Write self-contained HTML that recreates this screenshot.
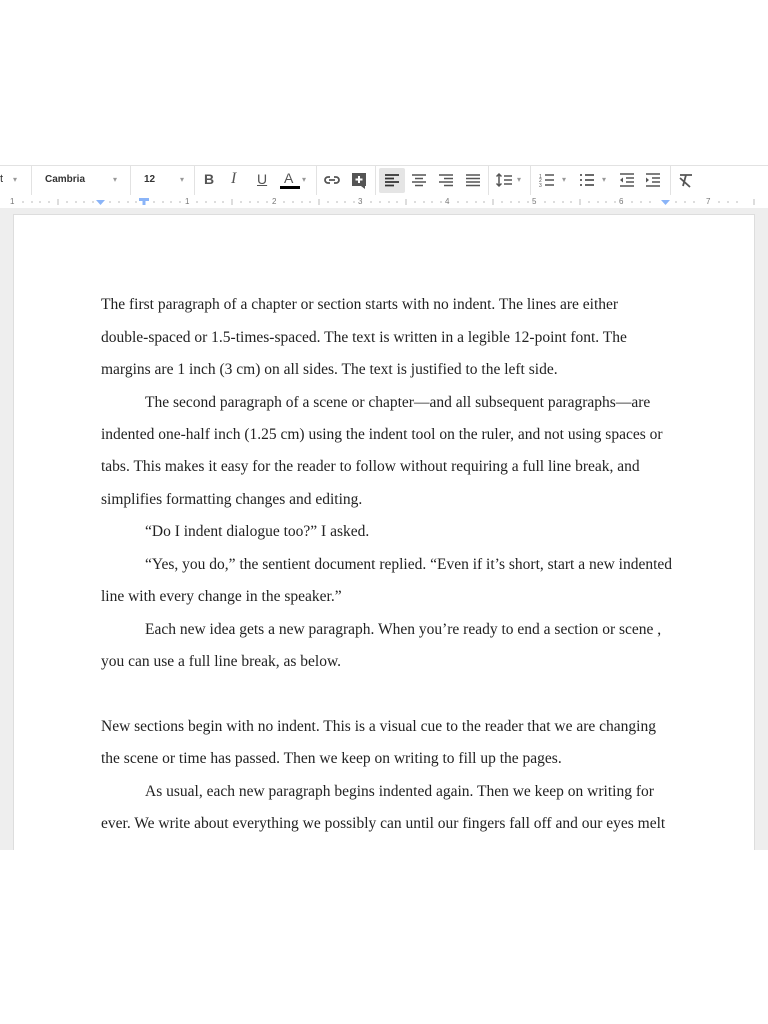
<!DOCTYPE html>
<html><head><style>
body{margin:0;width:768px;height:1024px;background:#fff;position:relative;overflow:hidden;font-family:"Liberation Sans",sans-serif}
.tb{position:absolute;left:0;top:165px;width:768px;height:29px;border-top:1px solid #e2e2e2;border-bottom:1px solid #e2e2e2;background:#fff}
.tb span{position:absolute;top:7px;font-size:11px;color:#333}
.sep{position:absolute;top:0;width:1px;height:29px;background:#e2e2e2}
.ic{position:absolute;top:6px}
.ruler{position:absolute;left:0;top:195px;width:768px;height:13px;background:#fff;font-size:8px;color:#777}
.gray{position:absolute;left:0;top:208px;width:768px;height:642px;background:#eeeeee;overflow:hidden}
.page{position:absolute;left:13px;top:6px;width:740px;height:700px;background:#fff;border:1px solid #ddd}
.l{position:absolute;left:101px;white-space:nowrap;font-family:"Liberation Serif",serif;font-size:15.5px;color:#222}
</style></head><body>
<div class="tb">
<span style="left:0">t</span><span style="left:13px;color:#999;font-size:8px;top:9px">▾</span>
<div class="sep" style="left:31px"></div>
<span style="left:45px;font-weight:bold;font-size:10px;top:8px">Cambria</span><span style="left:113px;color:#999;font-size:8px;top:9px">▾</span>
<div class="sep" style="left:130px"></div>
<span style="left:144px;font-weight:bold;font-size:10px;top:8px">12</span><span style="left:180px;color:#999;font-size:8px;top:9px">▾</span>
<div class="sep" style="left:194px"></div>
<span style="left:204px;font-weight:bold;font-size:14px;top:5px;color:#555">B</span>
<span style="left:231px;font-style:italic;font-family:'Liberation Serif';font-size:16px;top:4px;color:#555">I</span>
<span style="left:257px;text-decoration:underline;font-size:14px;top:5px;color:#555">U</span>
<span style="left:284px;font-size:14px;top:4px;color:#555">A</span><div style="position:absolute;left:280px;top:20px;width:20px;height:3px;background:#000"></div><span style="left:302px;color:#999;font-size:8px;top:9px">▾</span>
<div class="sep" style="left:316px"></div>
<svg class="ic" style="left:323px" width="18" height="16"><path d="M7 5H5a3 3 0 0 0 0 6h2M11 5h2a3 3 0 0 1 0 6h-2M6 8h6" stroke="#555" stroke-width="1.8" fill="none"/></svg>
<svg class="ic" style="left:351px" width="18" height="18"><rect x="1" y="1" width="14" height="13" fill="#555"/><path d="M8 4v7M4.5 7.5h7" stroke="#fff" stroke-width="2"/><path d="M10 14l4 3v-3z" fill="#555"/></svg>
<div class="sep" style="left:375px"></div>
<div style="position:absolute;left:379px;top:2px;width:26px;height:25px;background:#e5e5e5;border-radius:2px"></div>
<svg class="ic" style="left:383px" width="18" height="16"><path d="M2 3h14M2 6.5h9M2 10h14M2 13.5h9" stroke="#333" stroke-width="1.8"/></svg>
<svg class="ic" style="left:410px" width="18" height="16"><path d="M2 3h14M5 6.5h8M2 10h14M5 13.5h8" stroke="#555" stroke-width="1.5"/></svg>
<svg class="ic" style="left:437px" width="18" height="16"><path d="M2 3h14M7 6.5h9M2 10h14M7 13.5h9" stroke="#555" stroke-width="1.5"/></svg>
<svg class="ic" style="left:464px" width="18" height="16"><path d="M2 3h14M2 6.5h14M2 10h14M2 13.5h14" stroke="#555" stroke-width="1.5"/></svg>
<div class="sep" style="left:488px"></div>
<svg class="ic" style="left:495px" width="22" height="16"><path d="M4 2v12M1.5 4.5L4 2l2.5 2.5M1.5 11.5L4 14l2.5-2.5M9 4h8M9 8h8M9 12h8" stroke="#555" stroke-width="1.5" fill="none"/></svg><span style="left:517px;color:#999;font-size:8px;top:9px">▾</span>
<div class="sep" style="left:530px"></div>
<svg class="ic" style="left:538px" width="18" height="16"><path d="M7 3h9M7 8h9M7 13h9" stroke="#555" stroke-width="1.5"/><text x="1" y="6" font-size="5" fill="#555">1</text><text x="1" y="10" font-size="5" fill="#555">2</text><text x="1" y="15" font-size="5" fill="#555">3</text></svg><span style="left:562px;color:#999;font-size:8px;top:9px">▾</span>
<svg class="ic" style="left:578px" width="18" height="16"><path d="M7 3h9M7 8h9M7 13h9M2 3h2M2 8h2M2 13h2" stroke="#555" stroke-width="1.8"/></svg><span style="left:602px;color:#999;font-size:8px;top:9px">▾</span>
<svg class="ic" style="left:618px" width="18" height="16"><path d="M2 2h14M8 6h8M8 10h8M2 14h14" stroke="#555" stroke-width="1.5"/><path d="M5 5.5v5L2 8z" fill="#555"/></svg>
<svg class="ic" style="left:644px" width="18" height="16"><path d="M2 2h14M8 6h8M8 10h8M2 14h14" stroke="#555" stroke-width="1.5"/><path d="M2 5.5v5L5 8z" fill="#555"/></svg>
<div class="sep" style="left:670px"></div>
<svg class="ic" style="left:678px" width="18" height="16"><path d="M2 3h12M8 3l-3 11M2 6l10 9" stroke="#555" stroke-width="1.8" fill="none"/></svg>
</div>
<div class="ruler">
<svg width="768" height="13" style="position:absolute;left:0;top:0">
<g stroke="#bbb" stroke-width="1">
<path d="M23 6v2M32 6v2M40 6v2M49 6v2M58 4v6M67 6v2M76 6v2M84 6v2M93 6v2M110 6v2M119 6v2M128 6v2M136 6v2M154 6v2M163 6v2M171 6v2M180 6v2M197 6v2M206 6v2M215 6v2M223 6v2M232 4v6M241 6v2M250 6v2M258 6v2M267 6v2M284 6v2M293 6v2M302 6v2M310 6v2M319 4v6M328 6v2M337 6v2M345 6v2M354 6v2M371 6v2M380 6v2M389 6v2M397 6v2M406 4v6M415 6v2M424 6v2M432 6v2M441 6v2M458 6v2M467 6v2M476 6v2M484 6v2M493 4v6M502 6v2M511 6v2M519 6v2M528 6v2M545 6v2M554 6v2M563 6v2M571 6v2M580 4v6M589 6v2M598 6v2M606 6v2M615 6v2M632 6v2M641 6v2M650 6v2M676 6v2M685 6v2M694 6v2M719 6v2M728 6v2M737 6v2M754 4v6"/>
</g>
<path d="M96 5h9l-4.5 5z" fill="#8ab4f8"/>
<path d="M139 3h10v3h-3.5v4h-3v-4h-3.5z" fill="#8ab4f8"/>
<path d="M661 5h9l-4.5 5z" fill="#8ab4f8"/>
<g font-size="8" fill="#777" font-family="Liberation Sans"><text x="10" y="9">1</text><text x="185" y="9">1</text><text x="272" y="9">2</text><text x="358" y="9">3</text><text x="445" y="9">4</text><text x="532" y="9">5</text><text x="619" y="9">6</text><text x="706" y="9">7</text></g>
</svg>
</div>
<div class="gray"><div class="page"></div></div>
<div class="l" style="top:296px">The first paragraph of a chapter or section starts with no indent. The lines are either</div>
<div class="l" style="top:329px">double-spaced or 1.5-times-spaced. The text is written in a legible 12-point font. The</div>
<div class="l" style="top:361px">margins are 1 inch (3 cm) on all sides. The text is justified to the left side.</div>
<div class="l" style="top:394px;left:145px">The second paragraph of a scene or chapter—and all subsequent paragraphs—are</div>
<div class="l" style="top:426px">indented one-half inch (1.25 cm) using the indent tool on the ruler, and not using spaces or</div>
<div class="l" style="top:458px">tabs. This makes it easy for the reader to follow without requiring a full line break, and</div>
<div class="l" style="top:491px">simplifies formatting changes and editing.</div>
<div class="l" style="top:523px;left:145px">“Do I indent dialogue too?” I asked.</div>
<div class="l" style="top:556px;left:145px">“Yes, you do,” the sentient document replied. “Even if it’s short, start a new indented</div>
<div class="l" style="top:588px">line with every change in the speaker.”</div>
<div class="l" style="top:621px;left:145px">Each new idea gets a new paragraph. When you’re ready to end a section or scene ,</div>
<div class="l" style="top:653px">you can use a full line break, as below.</div>
<div class="l" style="top:718px">New sections begin with no indent. This is a visual cue to the reader that we are changing</div>
<div class="l" style="top:750px">the scene or time has passed. Then we keep on writing to fill up the pages.</div>
<div class="l" style="top:783px;left:145px">As usual, each new paragraph begins indented again. Then we keep on writing for</div>
<div class="l" style="top:815px">ever. We write about everything we possibly can until our fingers fall off and our eyes melt</div>
</body></html>
